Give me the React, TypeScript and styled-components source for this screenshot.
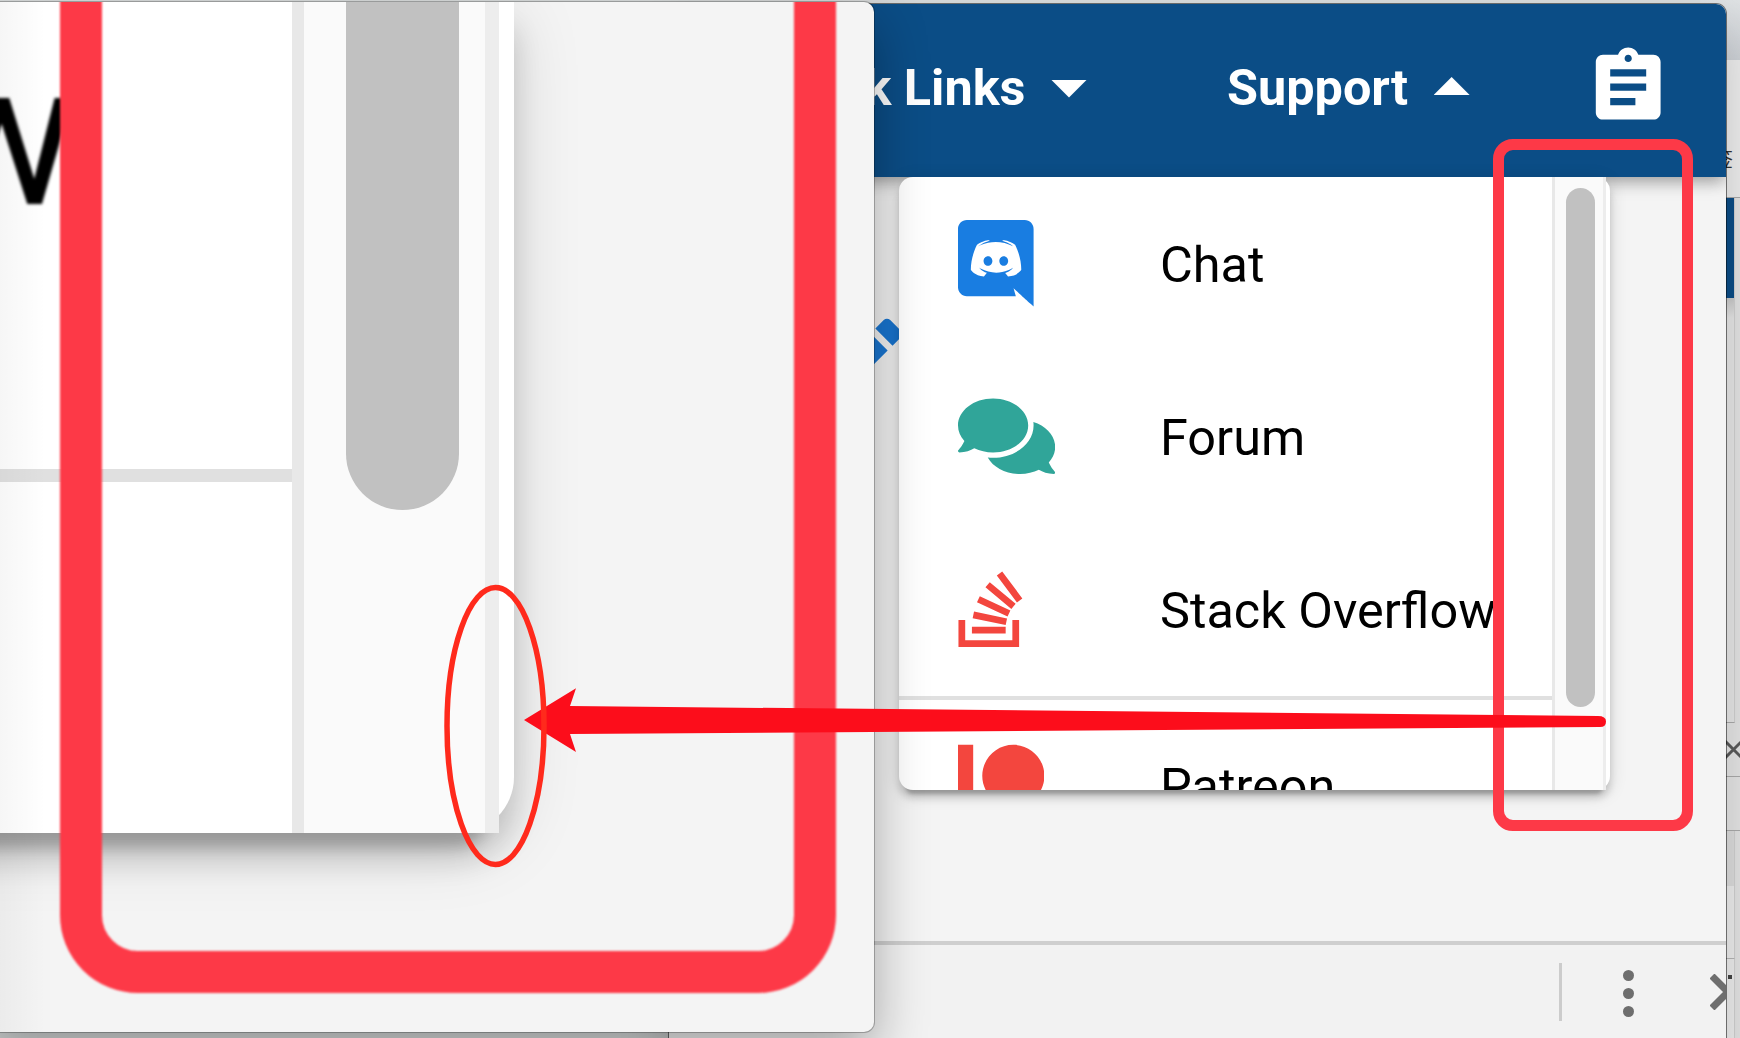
import React from "react";
import styled, { createGlobalStyle } from "styled-components";
import { FaComments, FaStackOverflow, FaPatreon } from "react-icons/fa";
import { MdAssignment, MdEdit } from "react-icons/md";

const GlobalStyle = createGlobalStyle`
  * { box-sizing: border-box; }
  html, body { margin: 0; padding: 0; overflow: hidden; }
  body { font-family: Roboto, "Noto Sans CJK SC", sans-serif; }
  svg { display: block; }
`;

const Desktop = styled.div`
  position: relative;
  width: 1740px;
  height: 1038px;
  overflow: hidden;
  background: #dadddd;
`;

/* Browser window peeking out at the far right */
const BackWindow = styled.div`
  position: absolute;
  top: 0;
  right: 0;
  width: 40px;
  height: 1038px;
  display: flex;
  flex-direction: column;
  background: #e3e3e3;
`;

const Strip = styled.div<{ $h: number; $bg: string; $line?: string; $inset?: number }>`
  flex: none;
  height: ${(p) => p.$h}px;
  margin-right: ${(p) => p.$inset ?? 0}px;
  background: ${(p) => p.$bg};
  border-bottom: ${(p) => (p.$line ? `1.5px solid ${p.$line}` : "none")};
  border-right: ${(p) => (p.$inset ? "1px solid #cfcfcf" : "none")};
  display: flex;
  justify-content: flex-end;
  align-items: center;
`;

const BackGlyph = styled.span`
  font: 20px/24px "Noto Sans CJK SC", sans-serif;
  color: #333;
  padding-right: 7px;
  margin-top: 61px;
`;

const BackClose = styled.div`
  flex: none;
  margin-right: -5px;
`;

const Speck = styled.i`
  align-self: flex-start;
  width: 4px;
  height: 4px;
  margin: 16px 2px 0 0;
  background: #444;
`;

const FrontWindow = styled.div`
  position: absolute;
  z-index: 0;
  left: 669px;
  top: 4px;
  width: 1057px;
  height: 1060px;
  display: flex;
  flex-direction: column;
  border-radius: 10px 10px 0 0;
  overflow: hidden;
  background: #f4f4f4;
`;

const FrontShadow = styled.div`
  position: absolute;
  left: 669px;
  top: 4px;
  width: 1057px;
  height: 1060px;
  border-radius: 10px 10px 0 0;
  box-shadow: 0 0 0 1px rgba(0, 0, 0, 0.5), 0 20px 50px rgba(0, 0, 0, 0.18);
`;

const AppBar = styled.header`
  position: relative;
  z-index: 1;
  flex: none;
  height: 173px;
  padding: 0 54.5px 7px 0;
  display: flex;
  align-items: center;
  justify-content: flex-end;
  background: #0b4d86;
  color: #fff;
  box-shadow: 0 7px 14px -3px rgba(0, 0, 0, 0.2), 0 4px 18px rgba(0, 0, 0, 0.22);
`;

const NavItem = styled.div<{ $gap: number }>`
  display: flex;
  align-items: center;
  margin-right: ${(p) => p.$gap}px;
  padding-top: 2px;
  font-size: 50.4px;
  line-height: 60px;
  font-weight: 700;
  white-space: nowrap;
`;

const Caret = styled.span<{ $up?: boolean }>`
  width: 36px;
  height: 18px;
  margin-left: 25.5px;
  margin-top: ${(p) => (p.$up ? -4 : 1)}px;
  background: #fff;
  clip-path: ${(p) => (p.$up ? "polygon(50% 0, 100% 100%, 0 100%)" : "polygon(0 0, 100% 0, 50% 100%)")};
`;

const Page = styled.main`
  position: relative;
  flex: none;
  height: 764px;
  padding-left: 230px;
`;

const EditMark = styled.div`
  position: absolute;
  left: 137px;
  top: 127.5px;
  color: #1976d2;
`;

const elevation = (k: number) =>
  `0 ${3 * k}px ${k}px ${-2 * k}px rgba(0,0,0,.2), 0 ${2 * k}px ${2 * k}px rgba(0,0,0,.14), 0 ${k}px ${5 * k}px rgba(0,0,0,.14)`;

const Menu = styled.div`
  position: relative;
  z-index: 2;
  width: 711px;
  height: 613px;
  padding-right: 4px;
  border-radius: 14px;
  background: #fff;
  box-shadow: ${elevation(3.6)};
`;

const MenuScroll = styled.div`
  height: 100%;
  display: flex;
  overflow: hidden;
  border-radius: 14px 0 0 14px;
`;

const MenuList = styled.div`
  flex: 1;
  min-width: 0;
`;

const MenuRow = styled.div`
  height: 173px;
  padding-left: 59px;
  display: flex;
  align-items: center;
  font-size: 50.4px;
  line-height: 60px;
  color: #000;
  white-space: nowrap;
`;

const MenuLabel = styled.span`
  padding-top: 2px;
`;

const IconCell = styled.span<{ $color: string; $w: number }>`
  flex: none;
  width: 202px;
  color: ${(p) => p.$color};
  svg { height: 86.4px; width: ${(p) => p.$w}px; }
`;

const Divider = styled.div<{ $h: number }>`
  height: ${(p) => p.$h}px;
  background: #e0e0e0;
`;

const Track = styled.div`
  flex: none;
  width: 54px;
  padding: 11px 7px 0 11px;
  border-left: 3.5px solid #e8e8e8;
  border-right: 3.5px solid #ededed;
  background: #fafafa;
`;

const Thumb = styled.div`
  width: 29px;
  height: 519px;
  border-radius: 15px;
  background: #c1c1c1;
`;

const DevBar = styled.footer`
  flex: 1;
  display: flex;
  align-items: flex-start;
  justify-content: flex-end;
  border-top: 4px solid #cfcfcf;
  background: #f2f2f2;
  padding-top: 18px;
`;

const DevSeparator = styled.i`
  width: 3px;
  height: 58px;
  margin-right: 61.5px;
  background: #ccc;
`;

const Dots = styled.div`
  display: flex;
  flex-direction: column;
  gap: 7px;
  padding-top: 7px;
  i { width: 11px; height: 11px; border-radius: 50%; background: #6e6e6e; }
`;

const DevClose = styled.div`
  margin: 11px -19.5px 0 75.5px;
`;

/* Magnified view on the left */
const ZoomWindow = styled.div`
  position: absolute;
  z-index: 1;
  left: -20px;
  top: 2px;
  width: 894px;
  height: 1030px;
  padding-left: 20px;
  border-radius: 10px;
  background: #f4f4f4;
  box-shadow: 0 0 0 1px rgba(0, 0, 0, 0.25), 0 22px 54px rgba(0, 0, 0, 0.33);
`;

const ZoomBody = styled.div`
  position: relative;
  height: 100%;
  overflow: hidden;
  border-radius: 0 10px 10px 0;
`;

const ZoomMenu = styled.div`
  width: 614px;
  height: 831px;
  margin-left: -100px;
  padding: 0 15px 0 100px;
  border-radius: 0 0 56px 0;
  background: #fff;
  box-shadow: ${elevation(14)};
`;

const ZoomScroll = styled.div`
  display: flex;
  height: 100%;
`;

const ZoomList = styled.div`
  flex: 1;
  min-width: 0;
  overflow: hidden;
`;

const ZoomText = styled.div`
  height: 467px;
  padding-top: 17px;
  margin-left: -73px;
  font-size: 200px;
  line-height: 234px;
  color: #000;
  filter: blur(1.4px);
`;

const ZoomTrack = styled.div`
  flex: none;
  width: 207px;
  padding-left: 41.5px;
  border-left: 12px solid #e8e8e8;
  border-right: 14px solid #ededed;
  background: #fafafa;
  filter: blur(0.6px);
`;

const ZoomThumb = styled.div`
  width: 113px;
  height: 508px;
  border-radius: 0 0 57px 57px;
  background: #c1c1c1;
`;

const EdgeShade = styled.div`
  position: absolute;
  left: 0;
  top: 0;
  width: 46px;
  height: 100%;
  background: linear-gradient(90deg, rgba(0, 0, 0, 0.035), transparent);
`;

const ZoomFrame = styled.div`
  position: absolute;
  left: 60px;
  top: -80px;
  width: 776px;
  height: 1070.5px;
  border: 42.5px solid #fd3947;
  border-radius: 78px;
  filter: blur(1.2px);
`;

const RedFrame = styled.div`
  position: absolute;
  z-index: 2;
  left: 1493px;
  top: 139px;
  width: 200px;
  height: 692px;
  border: 11px solid #fd3947;
  border-radius: 20px;
`;

const Annotation = styled.svg`
  position: absolute;
  z-index: 3;
  left: 0;
  top: 0;
`;

const CrossIcon = ({ size, weight, color }: { size: number; weight: number; color: string }) => (
  <svg width={size} height={size} viewBox={`0 0 ${size} ${size}`} stroke={color} strokeWidth={weight} fill="none">
    <path d={`M2 2L${size - 2} ${size - 2}M${size - 2} 2L2 ${size - 2}`} />
  </svg>
);

const DiscordIcon = () => (
  <svg viewBox="0 0 448 512" fill="currentColor">
    <path d="M297.216 243.2c0 15.616-11.52 28.416-26.112 28.416-14.336 0-26.112-12.8-26.112-28.416s11.52-28.416 26.112-28.416c14.592 0 26.112 12.8 26.112 28.416zm-119.552-28.416c-14.592 0-26.112 12.8-26.112 28.416s11.776 28.416 26.112 28.416c14.592 0 26.112-12.8 26.112-28.416.256-15.616-11.52-28.416-26.112-28.416zM448 52.736V512c-64.494-56.994-43.868-38.128-118.784-107.776l13.568 47.36H52.48C23.552 451.584 0 428.032 0 398.848V52.736C0 23.552 23.552 0 52.48 0h343.04C424.448 0 448 23.552 448 52.736zm-72.96 242.688c0-82.432-36.864-149.248-36.864-149.248-36.864-27.648-71.936-26.88-71.936-26.88l-3.584 4.096c43.52 13.312 63.744 32.512 63.744 32.512-60.811-33.329-132.244-33.335-191.232-7.424-9.472 4.352-15.104 7.424-15.104 7.424s21.248-20.224 67.328-33.536l-2.56-3.072s-35.072-.768-71.936 26.88c0 0-36.864 66.816-36.864 149.248 0 0 21.504 37.12 78.08 38.912 0 0 9.472-11.52 17.152-21.248-32.512-9.728-44.8-30.208-44.8-30.208 3.766 2.636 9.976 6.053 10.496 6.4 43.21 24.198 104.588 32.126 159.744 8.96 8.96-3.328 18.944-8.192 29.44-15.104 0 0-12.8 20.992-46.336 30.464 7.68 9.728 16.896 20.736 16.896 20.736 56.576-1.792 78.336-38.912 78.336-38.912z" />
  </svg>
);

export default function App() {
  return (
    <>
      <GlobalStyle />
      <Desktop>
        <BackWindow>
          <Strip $h={60} $bg="linear-gradient(#dfe2e4, #cdd1d6)" />
          <Strip $h={138} $bg="#ececec" $line="#a8a8a8">
            <BackGlyph>签</BackGlyph>
          </Strip>
          <Strip $h={100} $bg="#0b4d86" $inset={5} />
          <Strip $h={425} $bg="linear-gradient(#c8c8c8, #e6e6e6 20px)" $line="#aaa" $inset={5} />
          <Strip $h={54} $bg="#e4e4e4" $line="#aaa">
            <BackClose>
              <CrossIcon size={23} weight={3} color="#5a5a5a" />
            </BackClose>
          </Strip>
          <Strip $h={54} $bg="#e4e4e4" $line="#aaa" />
          <Strip $h={55} $bg="#dcdcdc" $inset={5} />
          <Strip $h={73} $bg="#ececec" $line="#b5b5b5" $inset={5} />
          <Strip $h={79} $bg="#ececec" $inset={5}>
            <Speck />
          </Strip>
        </BackWindow>

        <FrontShadow />
        <FrontWindow>
          <AppBar>
            <NavItem $gap={140}>
              Quick Links
              <Caret />
            </NavItem>
            <NavItem $gap={115.5}>
              Support
              <Caret $up />
            </NavItem>
            <MdAssignment size={86.4} />
          </AppBar>
          <Page>
            <EditMark>
              <MdEdit size={110} />
            </EditMark>
            <Menu>
              <MenuScroll>
                <MenuList>
                  <MenuRow>
                    <IconCell $color="#197de1" $w={75.6}><DiscordIcon /></IconCell>
                    <MenuLabel>Chat</MenuLabel>
                  </MenuRow>
                  <MenuRow>
                    <IconCell $color="#30a599" $w={97.2}><FaComments /></IconCell>
                    <MenuLabel>Forum</MenuLabel>
                  </MenuRow>
                  <MenuRow>
                    <IconCell $color="#f3463e" $w={64.8}><FaStackOverflow /></IconCell>
                    <MenuLabel>Stack Overflow</MenuLabel>
                  </MenuRow>
                  <Divider $h={3.6} />
                  <MenuRow>
                    <IconCell $color="#f3463e" $w={86.4}><FaPatreon /></IconCell>
                    <MenuLabel>Patreon</MenuLabel>
                  </MenuRow>
                </MenuList>
                <Track>
                  <Thumb />
                </Track>
              </MenuScroll>
            </Menu>
          </Page>
          <DevBar>
            <DevSeparator />
            <Dots><i /><i /><i /></Dots>
            <DevClose>
              <CrossIcon size={36} weight={7} color="#6e6e6e" />
            </DevClose>
          </DevBar>
        </FrontWindow>

        <ZoomWindow>
          <ZoomBody>
            <ZoomMenu>
              <ZoomScroll>
                <ZoomList>
                  <ZoomText>w</ZoomText>
                  <Divider $h={13} />
                </ZoomList>
                <ZoomTrack>
                  <ZoomThumb />
                </ZoomTrack>
              </ZoomScroll>
            </ZoomMenu>
            <ZoomFrame />
            <EdgeShade />
          </ZoomBody>
        </ZoomWindow>

        <RedFrame />
        <Annotation width="1740" height="1038" viewBox="0 0 1740 1038">
          <path d="M524 720L576 688.3L570 706L1598 716Q1606 716 1606 721.5Q1606 727 1600 727L570 734L576 752Z" fill="#fc0d1b" />
          <ellipse cx="495.5" cy="726" rx="48.5" ry="138.5" fill="none" stroke="#ff2a1c" strokeWidth="5.5" />
        </Annotation>
      </Desktop>
    </>
  );
}
